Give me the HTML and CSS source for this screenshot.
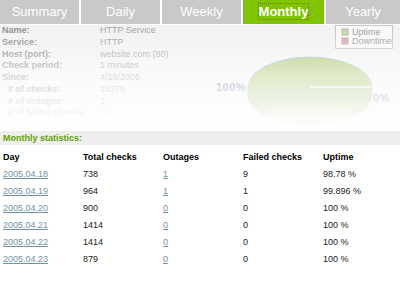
FILE: index.html
```html
<!DOCTYPE html>
<html lang="en">
<head>
    <meta charset="UTF-8">
    <title>Service Monitor - Monthly</title>
    <link rel="stylesheet" href="styles.css">
</head>
<body>
    <div class="tabs">
        <a class="tab" href="#">Summary</a>
        <a class="tab" href="#">Daily</a>
        <a class="tab" href="#">Weekly</a>
        <a class="tab active" href="#"><span class="focus">Monthly</span></a>
        <a class="tab last" href="#">Yearly</a>
    </div>

    <div class="overview">
        <div class="info">
            <div class="row"><span class="label">Name:</span><span class="value">HTTP Service</span></div>
            <div class="row"><span class="label">Service:</span><span class="value">HTTP</span></div>
            <div class="row"><span class="label">Host (port):</span><span class="value">website.com (80)</span></div>
            <div class="row"><span class="label">Check period:</span><span class="value">1 minutes</span></div>
            <div class="row"><span class="label">Since:</span><span class="value">4/18/2005</span></div>
            <div class="row sub"><span class="label"># of checks:</span><span class="value">16275</span></div>
            <div class="row sub"><span class="label"># of outages:</span><span class="value">2</span></div>
            <div class="row sub"><span class="label"># of failed checks:</span><span class="value">10</span></div>
        </div>
        <div class="chart">
            <svg width="200" height="106" viewBox="0 0 200 106">
                <!-- legend -->
                <rect x="135.5" y="0.5" width="57" height="23" fill="#f8f8f8" stroke="#c4c4c4"/>
                <rect x="142" y="4" width="6" height="6" fill="#c4da90" stroke="#aaa"/>
                <rect x="142" y="13" width="6" height="6" fill="#e0a0a0" stroke="#aaa"/>
                <text x="152" y="10" class="legend">Uptime</text>
                <text x="152" y="19" class="legend">Downtime</text>
                <!-- pie side -->
                <path d="M48 62 L48 70 A62 30 0 0 0 172 70 L172 62 A62 30 0 0 1 48 62 Z" fill="#98b45c" stroke="#a8bccc"/>
                <!-- pie top -->
                <ellipse cx="110" cy="62" rx="62" ry="30" fill="#a8c46a" stroke="#a8bccc"/>
                <line x1="110" y1="62" x2="172" y2="62" stroke="#e8eef4" stroke-width="1.5"/>
                <text x="16" y="66" class="pct">100%</text>
                <text x="173" y="77" class="pct">0%</text>
            </svg>
        </div>
        <div class="fade"></div>
    </div>

    <div class="section-title">Monthly statistics:</div>

    <table class="stats">
        <tr><th>Day</th><th>Total checks</th><th>Outages</th><th>Failed checks</th><th>Uptime</th></tr>
        <tr><td><a href="#">2005.04.18</a></td><td>738</td><td><a href="#">1</a></td><td>9</td><td>98.78 %</td></tr>
        <tr><td><a href="#">2005.04.19</a></td><td>964</td><td><a href="#">1</a></td><td>1</td><td>99.896 %</td></tr>
        <tr><td><a href="#">2005.04.20</a></td><td>900</td><td><a href="#">0</a></td><td>0</td><td>100 %</td></tr>
        <tr><td><a href="#">2005.04.21</a></td><td>1414</td><td><a href="#">0</a></td><td>0</td><td>100 %</td></tr>
        <tr><td><a href="#">2005.04.22</a></td><td>1414</td><td><a href="#">0</a></td><td>0</td><td>100 %</td></tr>
        <tr><td><a href="#">2005.04.23</a></td><td>879</td><td><a href="#">0</a></td><td>0</td><td>100 %</td></tr>
    </table>
</body>
</html>
```

FILE: styles.css
```css
body {
    margin: 0;
    background-color: white;
    font-family: "Liberation Sans", Arial, sans-serif;
    font-size: 9px;
    color: #222;
}
.tabs {
    display: flex;
    height: 24px;
    margin-bottom: 1px;
}
.tab {
    box-sizing: border-box;
    width: 81px;
    border-right: 2px solid white;
    background-color: #c9c9c9;
    color: white;
    font-size: 13px;
    line-height: 24px;
    text-align: center;
    text-decoration: none;
}
.tab.active {
    width: 83px;
    background-color: #80c400;
    font-weight: bold;
}
.tab.last {
    flex: 1;
    border-right: none;
}
.focus {
    outline: 1px dotted #7755dd;
    outline-offset: 0;
}
.overview {
    position: relative;
    display: flex;
    height: 106px;
    background-color: #f1f1f1;
}
.info {
    width: 200px;
    padding-left: 2px;
}
.row {
    display: flex;
    line-height: 11.75px;
}
.row.sub .label {
    padding-left: 6px;
    width: 92px;
}
.label {
    width: 98px;
    font-weight: bold;
    color: #858585;
}
.value {
    color: #9a9a9a;
}
.chart {
    flex: 1;
}
.chart svg {
    display: block;
}
.legend {
    font-family: "Liberation Sans", Arial, sans-serif;
    font-size: 9px;
    fill: #909090;
}
.pct {
    font-family: "Liberation Sans", Arial, sans-serif;
    font-size: 11px;
    font-weight: bold;
    letter-spacing: 0.5px;
    fill: #6a6a9a;
}
.fade {
    position: absolute;
    top: 0;
    left: 0;
    right: 0;
    bottom: 0;
    background: linear-gradient(to bottom, rgba(255,255,255,0.05) 0%, rgba(255,255,255,0.62) 45%, rgba(255,255,255,0.97) 90%);
}
.section-title {
    height: 14px;
    line-height: 14px;
    margin-bottom: 3px;
    padding-left: 3px;
    background-color: #eeeeee;
    color: #5fa300;
    font-weight: bold;
}
.stats {
    border-collapse: collapse;
    width: 400px;
}
.stats th, .stats td {
    width: 80px;
    height: 17px;
    padding: 0 0 0 3px;
    text-align: left;
    box-sizing: border-box;
}
.stats th {
    color: black;
}
.stats a {
    color: #7192a4;
}
```
